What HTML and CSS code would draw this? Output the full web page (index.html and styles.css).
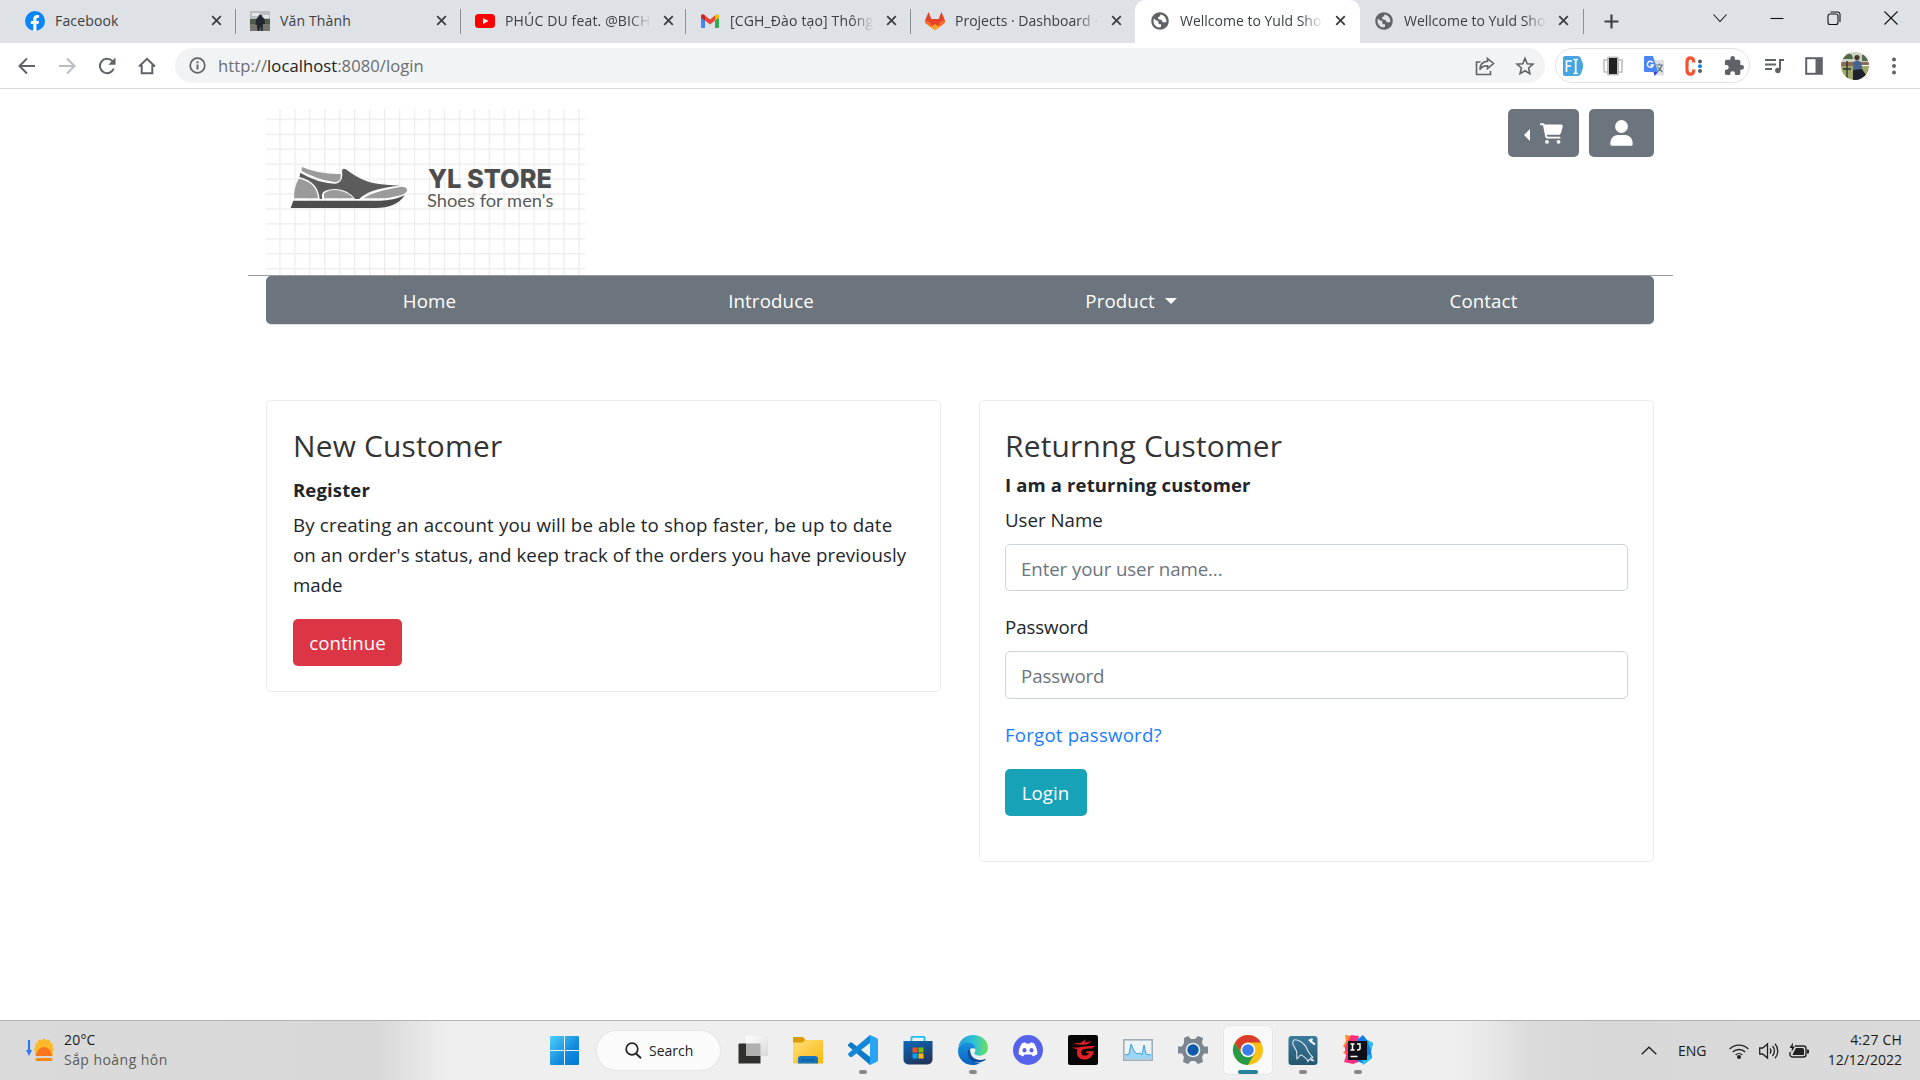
FILE: index.html
```html
<!DOCTYPE html>
<html lang="en">
<head>
<meta charset="utf-8">
<title>Wellcome to Yuld Shop</title>
<link rel="stylesheet" href="styles.css">
</head>
<body>
<svg class="defs" width="0" height="0" aria-hidden="true">
  <defs>
    <symbol id="x" viewBox="0 0 12 12"><path d="M1.3 1.3l9.4 9.4M10.7 1.3l-9.4 9.4" stroke="#3c4043" stroke-width="2"/></symbol>
    <symbol id="globe" viewBox="0 0 24 24"><path fill="#5f6368" d="M12 1.500C6.200 1.500 1.500 6.200 1.500 12S6.200 22.500 12 22.500 22.500 17.800 22.500 12 17.800 1.500 12 1.500z"/><path fill="var(--tab)" d="M4.200 12c0-1 .2-2 .6-2.900 1.500 2 3 2.700 5.200 2.700v2.200c0 1 1 2 2 2h1.200v2c0 .8-.4 1.500-1.200 1.800C7.600 19.800 4.200 16.400 4.200 12zM12.200 4.200c.6 1.400-.4 2.500-1.800 2.900-1 .2-.9 1.300-.4 2.100.8 1.100 2.400.8 3.600 1.500 1.100.7.900 2.300 2.100 2.800 1.300.6 2.600-.4 4-.2.3-4.800-3-8.900-7.500-9.100z"/></symbol>
  </defs>
</svg>

<header class="chrome">
  <div class="tabs">
    <div class="tab">
      <svg class="fav" viewBox="0 0 20 20"><circle cx="10" cy="10" r="10" fill="#0a85f7"/><path fill="#fff" d="M8.300 20v-7H5.800v-3h2.500V8c0-2.600 1.500-4 3.800-4 1 0 2 .2 2 .2v2.500h-1.200c-1.100 0-1.500.7-1.500 1.400V10h2.600l-.5 3h-2.100v7z"/></svg>
      <span class="label l1">Facebook</span><svg class="close"><use href="#x"/></svg>
    </div>
    <div class="tab">
      <svg class="fav" viewBox="0 0 20 20"><path fill="#b9bdc0" d="M0 0h20v9H0z"/><path fill="#e3e5e7" d="M2 2h7v3H2zM13 4h6v3h-6z"/><path fill="#4f5b48" d="M0 8h20v5H0z"/><path fill="#77776f" d="M0 13h20v7H0z"/><path fill="#222730" d="M8.500 5.500a1.800 1.800 0 0 1 3.600 0l2.400 2.500.5 5h-2l-.5 7h-1.500l-.7-5-1 5H7.500l-.5-6H5.500l.5-5.500z"/></svg>
      <span class="label l1">Văn Thành</span><svg class="close"><use href="#x"/></svg>
    </div>
    <div class="tab">
      <svg class="fav" viewBox="0 0 20 20"><rect y="3" width="20" height="14" rx="3.500" fill="#f00"/><path fill="#fff" d="M8 7l5.500 3L8 13z"/></svg>
      <span class="label l1 fade">PHÚC DU feat. @BICH</span><svg class="close"><use href="#x"/></svg>
    </div>
    <div class="tab">
      <svg class="fav" viewBox="0 0 20 20"><path fill="#4285f4" d="M1 5l4 3v9H2.200A1.200 1.200 0 0 1 1 15.800z"/><path fill="#34a853" d="M19 5l-4 3v9h2.800a1.200 1.200 0 0 0 1.200-1.200z"/><path fill="#ea4335" d="M5 4.500l5 4 5-4v5l-5 4-5-4z"/><path fill="#c5221f" d="M1 5.200C1 3 3.300 2.800 4.200 3.800L5 4.500v5L1 6.700z"/><path fill="#fbbc04" d="M19 5.200c0-2.200-2.300-2.400-3.200-1.400l-.8.7v5l4-2.800z"/></svg>
      <span class="label l1 fade">[CGH_Đào tạo] Thông</span><svg class="close"><use href="#x"/></svg>
    </div>
    <div class="tab before-active">
      <svg class="fav" viewBox="0 0 20 20"><path fill="#e24329" d="M10 19L.5 12 0 9.500 3.600 1l2.700 7h7.400l2.700-7L20 9.500l-.5 2.500z"/><path fill="#fc6d26" d="M0 9.500c2 .2 3.600 1 5 2l5 7.500-8.500-6A3.500 3.500 0 0 1 0 9.500zM20 9.500c-2 .2-3.600 1-5 2L10 19l8.500-6A3.500 3.500 0 0 0 20 9.500z"/><path fill="#fca326" d="M10 13l4.300 3L10 19.300 5.700 16z"/></svg>
      <span class="label fade">Projects · Dashboard ·</span><svg class="close"><use href="#x"/></svg>
    </div>
    <div class="tab active">
      <svg class="fav"><use href="#globe"/></svg>
      <span class="label fade">Wellcome to Yuld Sho</span><svg class="close"><use href="#x"/></svg>
    </div>
    <div class="tab last">
      <svg class="fav"><use href="#globe"/></svg>
      <span class="label fade">Wellcome to Yuld Sho</span><svg class="close"><use href="#x"/></svg>
    </div>
    <svg class="plus" viewBox="0 0 16 16"><path d="M8 .5v15M.5 8h15" stroke="#3c4043" stroke-width="2.300"/></svg>
    <div class="window-buttons">
      <svg viewBox="0 0 14 14"><path d="M.5 3.500L7 10.500l6.500-7"/></svg>
      <svg viewBox="0 0 14 14"><path d="M.5 7.500h13"/></svg>
      <svg viewBox="0 0 14 14"><rect x="1" y="3" width="10" height="10.500" rx="2"/><path d="M3.500 1h7a2.500 2.500 0 0 1 2.500 2.500V11"/></svg>
      <svg viewBox="0 0 14 14"><path d="M.5.5l13 13M13.500.5l-13 13"/></svg>
    </div>
  </div>

  <div class="toolbar">
    <div class="nav-icons">
      <svg viewBox="0 0 20 20" stroke="#5f6368"><path d="M18 10H3M10 2.500L2.500 10l7.500 7.500"/></svg>
      <svg viewBox="0 0 20 20" stroke="#bbbdc0"><path d="M2 10h15M10 2.500l7.500 7.500-7.500 7.500"/></svg>
      <svg viewBox="0 0 20 20" stroke="#5f6368"><path d="M16.800 12.500A7.200 7.200 0 1 1 15.500 5.200L17 7"/><path fill="#5f6368" stroke="none" d="M18.500 1.500v7.200h-7.200z"/></svg>
      <svg viewBox="0 0 20 20" stroke="#5f6368"><path d="M2 10.500L10 2.800l8 7.700M4.700 9v8.200h10.600V9"/></svg>
    </div>
    <div class="omnibox">
      <svg class="info" viewBox="0 0 17 17"><circle cx="8.500" cy="8.500" r="7.300" fill="none" stroke="#5f6368" stroke-width="1.700"/><path d="M8.500 7.500v5M8.500 4.300v1.900" stroke="#5f6368" stroke-width="1.900"/></svg>
      <span class="url">http://<b>localhost</b>:8080/login</span>
      <svg class="share" viewBox="0 0 20 20"><path d="M5.500 6H1.500v12.500h14V15"/><path d="M12.500 2.500l6 5-6 5V9.700c-4 0-6.300 1.200-7.600 4C5 9 7.500 5.500 12.500 5.200z"/></svg>
      <svg class="star" viewBox="0 0 20 20"><path d="M10 2.300l2.200 5.400 5.800.5-4.400 3.800 1.300 5.700-4.900-3-4.900 3L6.400 12 2 8.200l5.800-.5z"/></svg>
    </div>
    <div class="extensions">
      <svg viewBox="0 0 20 20"><path fill="#48a5e0" d="M2 0h12.500a4 4 0 0 1 3.300 2l2.200 6v4l-2.200 6a4 4 0 0 1-3.300 2H2a2 2 0 0 1-2-2V2a2 2 0 0 1 2-2z"/><path d="M3.500 16V5H9M3.500 10H8M10.500 3.500h1.200l1 1 1-1h1.200M10.500 17.500h1.200l1-1 1 1h1.200M12.700 4.500v12" fill="none" stroke="#fff" stroke-width="1.700"/></svg>
      <svg viewBox="0 0 20 20"><path fill="none" stroke="#bbb" stroke-width="1.500" d="M4 4H1v12h3M16 4h3v12h-3"/><rect x="4" y=".5" width="12" height="19" rx="1.500" fill="#bdbdbd"/><rect x="6" y="2" width="8" height="16" fill="#222"/></svg>
      <svg viewBox="0 0 20 20"><path fill="#dfe1e5" d="M8 4h11a1 1 0 0 1 1 1v13.500a1 1 0 0 1-1 1h-7z"/><path d="M12 9h7M15.500 7.500V9M18 9c-1 3.500-3 5.500-5.500 7M13.500 11l5 5" fill="none" stroke="#607d8b" stroke-width="1.200"/><path fill="#4a86f5" d="M1 0h8l5 16H1a1 1 0 0 1-1-1V1a1 1 0 0 1 1-1z"/><path fill="#3347b5" d="M9.500 16H14l-3.500 4z"/><path d="M8.800 6.500A3 3 0 1 0 9.300 9H6.500" fill="none" stroke="#fff" stroke-width="1.400"/></svg>
      <svg viewBox="0 0 20 20"><path d="M9.800 6.500C9.800 3 8.700 1.800 6.500 1.800S3 3 3 6v8c0 3 1.200 4.200 3.500 4.200s3.300-1.200 3.300-4.700" fill="none" stroke="#f4532e" stroke-width="3.200"/><circle cx="16" cy="5.500" r="2" fill="#555b66"/><circle cx="16" cy="10.300" r="2" fill="#1a83e0"/><circle cx="16" cy="15" r="2" fill="#555b66"/></svg>
      <svg viewBox="1 1 22 22"><path fill="#5f6368" d="M20.500 11H19V7a2 2 0 0 0-2-2h-4V3.500a2.500 2.500 0 0 0-5 0V5H4a2 2 0 0 0-2 2v3.800h1.500a2.700 2.700 0 0 1 0 5.400H2V20a2 2 0 0 0 2 2h3.800v-1.500a2.700 2.700 0 0 1 5.400 0V22H17a2 2 0 0 0 2-2v-4h1.500a2.500 2.500 0 0 0 0-5z"/></svg>
    </div>
    <div class="profile">
      <svg viewBox="0 0 20 20"><path d="M1 4h11M1 8.500h11M1 13h7M16 14V4h4" fill="none" stroke="#5f6368" stroke-width="2"/><circle cx="13.800" cy="14.500" r="2.700" fill="#5f6368"/></svg>
      <svg viewBox="0 0 20 20"><rect x="2.200" y="2.200" width="15.600" height="15.600" fill="none" stroke="#5f6368" stroke-width="2"/><path fill="#5f6368" d="M11.500 2H18v16h-6.500z"/></svg>
      <svg class="avatar" viewBox="0 0 28 28"><clipPath id="av"><circle cx="14" cy="14" r="14"/></clipPath><g clip-path="url(#av)"><path fill="#c9d3c0" d="M0 0h28v12H0z"/><path fill="#56694a" d="M0 3q6-4 11 0l1 4H0zM21 3l7-1v7h-7z"/><path fill="#9cab6c" d="M0 14h28v14H0z"/><path fill="#8a6a55" d="M0 10h13v4H0zM20 10h8v3h-8z"/><path d="M6 9v19M2 17h8" stroke="#2c2c2c" stroke-width="1.300"/><circle cx="16" cy="5.500" r="2.600" fill="#4b342b"/><path fill="#4a6390" d="M12.500 10l3.500-2 4 2 1.500 8-4 2h-5.500z"/><path fill="#1d222b" d="M12 18l9-1 4 6-7 5h-6z"/></g></svg>
      <svg viewBox="0 0 20 20" fill="#5f6368"><circle cx="10" cy="3.500" r="2"/><circle cx="10" cy="10" r="2"/><circle cx="10" cy="16.500" r="2"/></svg>
    </div>
  </div>
</header>

<main class="page">
  <div class="banner">
    <svg class="logo" viewBox="78 57 957 498">
      <defs><pattern id="grid" x="118" y="86" width="44.850" height="44.850" patternUnits="userSpaceOnUse"><path d="M0 2h45M2 0v45" stroke="#ebebeb" stroke-width="3.500" fill="none"/></pattern></defs>
      <rect x="78" y="57" width="957" height="498" fill="url(#grid)"/>
      <path fill="#4d4d4d" d="M160 332H420Q460 332 494 316Q470 354 405 354H152z"/>
      <path fill="#9b9b9b" d="M162 325Q162 290 176 266Q230 276 234 325zM186 231Q240 254 302 252V262Q300 278 282 276Q225 266 184 242zM252 325V312Q262 298 290 300Q320 304 342 325zM370 325Q400 304 484 290Q500 290 502 300Q500 310 482 316Q450 325 420 325z"/>
      <path fill="#5c5c5c" d="M181 248Q230 278 285 281Q306 280 307 255L306 243Q308 232 318 238Q375 284 440 284L480 287Q385 296 358 327H346Q320 296 285 297Q250 298 246 312V327H239Q234 274 178 261z"/>
      <text class="brand" x="564" y="294" textLength="372" lengthAdjust="spacingAndGlyphs">YL STORE</text>
      <text class="tagline" x="561" y="352" textLength="379" lengthAdjust="spacingAndGlyphs">Shoes for men's</text>
    </svg>
    <div class="actions">
      <button class="btn gray cart"><i class="caret-left"></i><svg viewBox="0 0 576 512"><path fill="#fff" d="M0 24C0 10.700 10.700 0 24 0h45.500c22 0 41.500 12.800 50.600 32H531c26.300 0 45.500 25 38.600 50.400l-41 152.300c-8.500 31.400-37 53.300-69.500 53.300H170.700l5.400 28.500c2.200 11.300 12.100 19.500 23.600 19.500H488c13.300 0 24 10.700 24 24s-10.700 24-24 24H199.700c-34.600 0-64.300-24.600-70.700-58.500L77.400 54.500C76.700 50.700 73.400 48 69.500 48H24C10.700 48 0 37.300 0 24z"/><circle cx="176" cy="464" r="48" fill="#fff"/><circle cx="464" cy="464" r="48" fill="#fff"/></svg></button>
      <button class="btn gray user"><svg viewBox="0 0 23 26"><circle cx="11.500" cy="6.500" r="6.400" fill="#fff"/><path fill="#fff" d="M.3 24c0-5.500 3-9 7.600-9h7.200c4.600 0 7.600 3.500 7.600 9 0 1.200-.6 1.800-1.600 1.800H1.900C.9 25.800.3 25.200.3 24z"/></svg></button>
    </div>
  </div>
  <nav class="menu">
    <a class="home">Home</a><a class="intro">Introduce</a><a class="product">Product<i class="caret-down"></i></a><a class="contact">Contact</a>
  </nav>

  <div class="columns">
    <section class="card">
      <h2>New Customer</h2>
      <p class="strong register">Register</p>
      <p class="text"><span class="p1">By creating an account you will be able to shop faster, be up to date</span><br><span class="p2">on an order's status, and keep track of the orders you have previously</span><br>made</p>
      <button class="btn red">continue</button>
    </section>
    <section class="card tall">
      <h2>Returnng Customer</h2>
      <p class="strong">I am a returning customer</p>
      <form>
        <label>User Name</label>
        <input type="text" placeholder="Enter your user name...">
        <label class="second">Password</label>
        <input class="pass" type="password" placeholder="Password">
        <a class="forgot">Forgot password?</a>
        <button type="button" class="btn teal">Login</button>
      </form>
    </section>
  </div>
</main>

<footer class="taskbar">
  <div class="weather">
    <svg viewBox="0 0 28 24"><path d="M3 2v12" stroke="#2b7bf3" stroke-width="2.200"/><path fill="#2b7bf3" d="M0 12h6l-3 6z"/><path fill="#fdb92c" d="M18 .5l2.500 1.500 3-.3 1 2.800 2.500 1.500-.5 3 1.500 2.500-1.500 2.500.5 4H9l.5-4L8 11.500 9.500 9 9 6l2.500-1.500 1-2.800 3 .3z"/><path fill="#f6761b" d="M10 18a8 9 0 1 1 16 0z"/><rect x="9.500" y="20" width="17" height="3" rx="1.500" fill="#f88a10"/></svg>
    <div class="lines"><span>20°C</span><span class="dim">Sắp hoàng hôn</span></div>
  </div>
  <div class="apps">
    <svg class="start" viewBox="0 0 29 29"><defs><linearGradient id="w" x1="0" y1="0" x2="1" y2="1"><stop offset="0" stop-color="#4fd0fc"/><stop offset=".6" stop-color="#138ade"/><stop offset="1" stop-color="#0078d4"/></linearGradient></defs><path fill="url(#w)" d="M1 0h13v14H0V1a1 1 0 0 1 1-1zM15 0h13a1 1 0 0 1 1 1v13H15zM0 15h14v14H1a1 1 0 0 1-1-1zM15 15h14v13a1 1 0 0 1-1 1H15z"/></svg>
    <div class="search"><svg viewBox="0 0 17 17"><circle cx="7" cy="7" r="5.800" fill="none" stroke="#222" stroke-width="1.700"/><path d="M11 11.500l5 4.800" stroke="#222" stroke-width="1.900"/></svg><span>Search</span></div>
    <div class="app"><svg viewBox="0 0 30 30"><defs><linearGradient id="tv" x2="1" y2="1"><stop stop-color="#fff"/><stop offset="1" stop-color="#d8d8d8"/></linearGradient></defs><path fill="#30302e" d="M1.500 8.500h20a1 1 0 0 1 1 1v19h-22v-19a1 1 0 0 1 1-1z"/><rect x="8" y="1" width="22" height="20" rx="1" fill="url(#tv)"/><path fill="#b0b0b0" d="M8 8.500h14.500V21H8z"/></svg></div>
    <div class="app"><svg viewBox="0 0 30 30"><defs><linearGradient id="fo" x2="1" y2="1"><stop stop-color="#ffe07a"/><stop offset="1" stop-color="#fbb80d"/></linearGradient></defs><path fill="#dc9c05" d="M1 2h9l2.500 3H30v8H0V3a1 1 0 0 1 1-1z"/><path fill="url(#fo)" d="M0 7.500h9.500L12 5h17a1 1 0 0 1 1 1v22.500H1a1 1 0 0 1-1-1z"/><path fill="#1673bf" d="M8 21h14a3 3 0 0 1 3 3v4.500H5V24a3 3 0 0 1 3-3z"/><path d="M8.500 25h13" stroke="#0d508c"/></svg></div>
    <div class="app running"><svg viewBox="0 0 30 30"><path fill="#0b7bc7" d="M0 9.500L2.200 7.500h1.600L22 22v8L.2 11z"/><path fill="#1388d8" d="M0 19.800l2.200 2.200h1.600L22 8V0L.2 18.500z"/><path fill="#27a5f2" d="M22 0l7 3.200a2 2 0 0 1 1 1.800v20a2 2 0 0 1-1 1.800L22 30l-1.500-1 1.500-1V2.300L20.500 1z"/></svg></div>
    <div class="app"><svg viewBox="0 0 30 30"><defs><linearGradient id="st" x2=".5" y2="1"><stop stop-color="#0a6cbd"/><stop offset="1" stop-color="#22365f"/></linearGradient></defs><path d="M8.500 7V2.500a.7.700 0 0 1 .7-.7h11.600a.7.700 0 0 1 .7.700V7" fill="none" stroke="#1fbdf3" stroke-width="1.800"/><path fill="url(#st)" d="M.5 6h29v18.500a5 5 0 0 1-5 5h-19a5 5 0 0 1-5-5z"/><path fill="#f25022" d="M9.500 12.500h5v5h-5z"/><path fill="#7fba00" d="M15.500 12.500h5v5h-5z"/><path fill="#00a4ef" d="M9.500 18.500h5v5h-5z"/><path fill="#ffb900" d="M15.500 18.500h5v5h-5z"/></svg></div>
    <div class="app running"><svg viewBox="0 0 24 24"><defs><linearGradient id="e1"><stop stop-color="#1f9fdf"/><stop offset=".55" stop-color="#30c3d3"/><stop offset="1" stop-color="#6be35a"/></linearGradient><linearGradient id="e2" x2="0" y2="1"><stop stop-color="#1a94df"/><stop offset="1" stop-color="#0a5fc2"/></linearGradient></defs><path fill="url(#e1)" d="M.3 10C1 4 6 0 12 0c7 0 12 4.600 12 10 0 4-3 6.500-6.500 6.500-2.500 0-4.500-.8-4.500-2 0-.7 1-1 1-2.800 0-3.500-4-5-7-5-3.500 0-6 1.500-6.700 3.300z"/><path fill="url(#e2)" d="M.1 11.500C.6 7.500 5 5.800 8.500 6c3 .3 5.500 2.500 5.500 5.500 0-1-5.500-2.500-5.500 3 0 5 4.500 8 9 8-2 1-3.800 1.500-5.500 1.500C5 24-.7 18.500.1 11.500z"/><path fill="#114f9f" d="M9.500 10.800c-3 2-2 8.500 2.500 10.500 4 1.700 7.500.3 9.800-1.300.5-.4.4-1-.3-.8-4.500 1.900-9.500 0-11-3.400-.8-1.800-.8-3.600-1-5z"/></svg></div>
    <div class="app"><svg viewBox="0 0 30 30"><circle cx="15" cy="15" r="15" fill="#5562ea"/><path fill="#fff" d="M9 8.200l3.200-.9.700 1.200h4.200l.7-1.200 3.200.9c2.400 3.500 3.600 7.200 3.300 11l-4.300 2.300-1.400-2h-7.200l-1.400 2-4.300-2.300c-.3-3.800.9-7.500 3.300-11z"/><ellipse cx="11.500" cy="15.200" rx="2" ry="2.200" fill="#5562ea"/><ellipse cx="18.500" cy="15.200" rx="2" ry="2.200" fill="#5562ea"/></svg></div>
    <div class="app"><svg viewBox="0 0 30 30"><rect width="30" height="30" rx="2" fill="#060606"/><path fill="#e01f26" d="M4.500 9.500c3-1.700 5-1.600 8-1.500l5-3.800-1 3.200c2.500 0 4.500-.5 6.500-1.400-1.500 3-4.500 3.700-8 3.700-3.500-.2-6-.9-10.500-.2zM3.500 12.500c5 .6 11-1.300 24-1.500l-4 2.600c-4-.5-8.500-.1-10 2.200-1.200 2.200 0 5 3.500 4.800 2.200-.1 3.500-1 4-2.600h-3.500l1.500-1.800h7c-1.500 5.500-4.500 8.300-9.500 8.300-6 0-9-4.500-7-10z"/></svg></div>
    <div class="app"><svg viewBox="0 0 30 30"><rect x=".8" y="4.800" width="28.400" height="20.400" fill="#eef3f7" stroke="#a3adb7" stroke-width="1.600"/><path fill="#9dd6f5" d="M2 24v-4l4-1 2-10 3 7 3 3 3-1 2 2 2-10 2 9 5 1v4z"/><path d="M2 20l4-1 2-10 3 7 3 3 3-1 2 2 2-10 2 9 5 1" fill="none" stroke="#3aa2df"/></svg></div>
    <div class="app"><svg viewBox="0 0 30 30"><path fill="#7c868f" d="M6 3l4-2 3 3h4l3-3 5 2-1 5 2 3.500h4v7h-4L24 22l1 5-5 2-3-3h-4l-3 3-5-2 1-5-2-3.500H0v-7h4L6 8z"/><circle cx="15" cy="15" r="7.300" fill="#e9eef2"/><circle cx="15" cy="15" r="5.700" fill="#0d5aa8"/></svg></div>
    <div class="app current"><svg viewBox="0 0 30 30"><circle cx="15" cy="15" r="15" fill="#fbc116"/><path fill="#269a46" d="M2 7.500A15 15 0 0 0 15 30l6.500-11.200L15 15 8.500 18.700z"/><path fill="#dc3c2e" d="M2 7.500A15 15 0 0 1 28 7.500H15a7.500 7.500 0 0 0-6.500 11.200z"/><circle cx="15" cy="15" r="7.300" fill="#fff"/><circle cx="15" cy="15" r="5.800" fill="#3a7cec"/></svg></div>
    <div class="app running"><svg viewBox="0 0 30 30"><defs><linearGradient id="my" x2="0" y2="1"><stop stop-color="#3c7b9b"/><stop offset="1" stop-color="#24566f"/></linearGradient></defs><rect x=".5" y="1" width="29" height="29" rx="3" fill="url(#my)"/><path d="M26 26l-5-1.500-1 2c-1-4-4-4-6-6.500l-2 .5-3 3.500c-1-3 .5-5-.5-8L5 9.500C4 5.500 6 4 9 5c5 1.500 9 5.500 11 11 1 3 3 4 5 6.500l-2.500.5z" fill="none" stroke="#d7e5ec" stroke-width="1.100"/><path d="M21 4.500l2 2 4 3M23 6.500l1-3" stroke="#fff" stroke-width="2"/></svg></div>
    <div class="app running"><svg viewBox="0 0 30 30"><path fill="#fe8c2e" d="M2 0l7 1 3 10-8 9-4-2 3-4-3-3 3-5z"/><path fill="#fd2f7f" d="M8 0l8 1-2 9-8 8 3 5 9 3-8 3-9-2 2-6-1-9z"/><path fill="#127dea" d="M15 4l5-4 4 5 6 3-2 8 1 7-8 6-7-3z"/><path fill="#22c3ec" d="M24 5l6 3-2 8zM20 30l8-6-1-5-8 6z"/><path fill="#101018" d="M5 6h19v19H5z"/><path d="M7.500 9h4M9.500 9v6M7.500 15h4M14 9h3v4.500q0 1.500-3 1.500M7.500 21.500h7" fill="none" stroke="#fff" stroke-width="1.500"/></svg></div>
  </div>
  <div class="tray">
    <svg class="up" viewBox="0 0 16 9"><path d="M.7 8.300L8 1.200l7.300 7.100" fill="none" stroke="#222" stroke-width="1.400"/></svg>
    <span class="lang">ENG</span>
    <svg class="ti" viewBox="0 0 20 16" fill="none" stroke="#222" stroke-width="1.400"><path d="M.7 6a13 13 0 0 1 18.600 0M3.800 9a8.800 8.800 0 0 1 12.400 0M6.700 12a4.700 4.700 0 0 1 6.600 0"/><circle cx="10" cy="14" r="1.300" fill="#222"/></svg>
    <svg class="ti" viewBox="0 0 20 16" fill="none" stroke="#222" stroke-width="1.300"><path d="M.7 5h3L8.500 1v14L3.700 11h-3zM11 5.500a4 4 0 0 1 0 5M13.500 3a7.500 7.500 0 0 1 0 10M16 .7a11 11 0 0 1 0 14.600"/></svg>
    <svg class="ti" viewBox="0 0 20 16"><path d="M6 3h8.500a2.500 2.500 0 0 1 2.500 2.500v6a2.500 2.500 0 0 1-2.500 2.500H3.500A2.500 2.500 0 0 1 1 11.500V9" fill="none" stroke="#222" stroke-width="1.400"/><path fill="#222" d="M7 5h6.500a1.500 1.500 0 0 1 1.500 1.500V12H3.500l1-2.500zM18 6.500h1a1 1 0 0 1 1 1v2a1 1 0 0 1-1 1h-1zM4-.5L.5 5H3L2.500 9 6 3.500H3.800z"/></svg>
    <div class="clock"><span class="time">4:27 CH</span><span class="date">12/12/2022</span></div>
  </div>
</footer>
</body>
</html>
```
FILE: styles.css
```css
* { box-sizing: border-box; }
body {
  margin: 0;
  width: 1920px;
  height: 1080px;
  overflow: hidden;
  display: flex;
  flex-direction: column;
  background: #fff;
  color: #212529;
  font-family: "Open Sans", "Noto Sans", sans-serif;
  font-size: 18.7px;
  line-height: 30px;
}
svg { display: block; flex: none; overflow: visible; }
.defs { position: absolute; }

/* Browser frame */
.chrome { height: 89px; border-bottom: 1px solid #d9dbde; flex: none; }
.tabs { display: flex; height: 43px; padding-left: 11px; background: #dee1e6; align-items: stretch; }
.tab {
  --tab: #dee1e6;
  display: flex;
  align-items: center;
  width: 225px;
  padding: 0 14px 2px 14px;
  position: relative;
}
.tab::after { content: ""; position: absolute; right: 0; top: 9px; width: 1px; height: 25px; background: #8b8e93; }
.tab.active { --tab: #fff; background: #fff; border-radius: 10px 10px 0 0; padding-left: 15px; }
.tab.before-active { width: 224px; padding-right: 13px; }
.tab.last { width: 224px; padding-right: 15px; }
.tab.active::after, .tab.before-active::after { display: none; }
.fav { width: 20px; height: 20px; margin-right: 10px; }
.label {
  flex: 1;
  white-space: nowrap;
  font-size: 14px;
  line-height: 22px;
  color: #3c4043;
  margin-right: 12px;
}
.label.fade {
  -webkit-mask-image: linear-gradient(to right, #000 calc(100% - 22px), transparent);
  mask-image: linear-gradient(to right, #000 calc(100% - 22px), transparent);
}
.label.l1 { letter-spacing: 0.15px; }
.close { width: 11px; height: 11px; }
.plus { width: 15px; height: 15px; margin: 14px 0 0 20px; }
.window-buttons { display: flex; gap: 43px; margin: 11px 22px 0 auto; }
.window-buttons svg { width: 14px; height: 14px; fill: none; stroke: #111; stroke-width: 1.1; }

.toolbar { display: flex; align-items: center; height: 45px; padding-left: 17px; }
.nav-icons { display: flex; gap: 20px; width: 158px; }
.nav-icons svg { width: 20px; height: 20px; fill: none; stroke-width: 2; }
.omnibox { display: flex; align-items: center; width: 1370px; height: 35px; border-radius: 18px; background: #f1f3f4; padding: 0 12px 0 14px; }
.info { width: 17px; height: 17px; margin-right: 12px; }
.url { font-size: 16.6px; letter-spacing: 0.06px; line-height: 24px; color: #6a6e73; flex: 1; }
.url b { font-weight: 400; color: #202124; }
.share, .star { width: 20px; height: 20px; fill: none; stroke: #5f6368; stroke-width: 1.6; margin-left: 20px; position: relative; left: 2px; }
.extensions { display: flex; align-items: center; justify-content: space-between; width: 195px; height: 35px; margin-left: 10px; padding: 0 6px; border: 1px solid #dfe1e4; border-radius: 18px; }
.extensions svg { width: 20px; height: 20px; }
.profile { display: flex; align-items: center; margin-left: 13px; }
.profile svg { width: 20px; height: 20px; margin-right: 20px; }
.profile svg:last-child { margin-right: 0; }
.profile .avatar { width: 28px; height: 28px; margin: 0 15px 0 -3px; }
.extensions svg, .profile svg { position: relative; left: 1px; }

/* Shop page */
.page { flex: 1; padding: 20px 247px 0 248px; }
.banner { display: flex; justify-content: space-between; align-items: flex-start; height: 167px; padding: 0 19px 0 18px; border-bottom: 1px solid #999; }
.logo { width: 319px; height: 166px; overflow: hidden; }
.brand { font: 800 79px Inter, sans-serif; fill: #4d4d4d; }
.tagline { font: 400 51px Lato, sans-serif; fill: #5a5a5a; }
.actions { display: flex; gap: 10px; }
.btn { font: inherit; border: 0; border-radius: 5px; color: #fff; height: 47px; padding: 0; display: flex; align-items: center; justify-content: center; }
.gray { background: #6c757d; height: 48px; }
.cart { width: 71px; justify-content: flex-start; padding-left: 16px; }
.cart svg { width: 23px; height: 21px; margin: 1px 0 0 10px; }
.user { width: 65px; }
.user svg { width: 23px; height: 26px; }
.caret-left { border: 6px solid transparent; border-left: 0; border-right-color: #fff; margin-top: 4px; }
.caret-down { display: inline-block; border: 6px solid transparent; border-bottom: 0; border-top-color: #fff; margin-left: 10px; vertical-align: 4px; }
.menu { display: flex; margin: 0 19px 0 18px; height: 48px; background: #6c757d; border-radius: 5px; box-shadow: 0 1px 0 #dfe1e4; color: #fff; line-height: 49px; text-align: center; letter-spacing: 0.12px; }
.home { width: 327px; }
.intro { width: 356px; }
.product { width: 364px; }
.contact { width: 341px; }

.columns { display: flex; gap: 38px; align-items: flex-start; margin: 76px 19px 0 18px; }
.card { width: 675px; height: 292px; border: 1px solid #ececec; border-radius: 5px; padding: 26px 25px 0 26px; }
.card.tall { height: 462px; padding-left: 25px; }
h2 { margin: 0; font-size: 29.9px; font-weight: 500; line-height: 36px; color: #333; letter-spacing: 0.2px; padding-top: 1px; margin-bottom: -1px; }
.strong { margin: 7px 0 0; font-weight: 700; font-size: 18.5px; letter-spacing: 0.14px; }
.register { margin-top: 12px; }
.text { margin: 5px 0 19px; white-space: nowrap; }
.p1 { letter-spacing: 0.16px; }
.p2 { letter-spacing: 0.08px; }
.red { width: 109px; background: #dc3545; }
.teal { width: 82px; background: #17a2b8; margin-top: 19px; padding-right: 1px; }
label, .forgot { display: block; margin-top: 5px; }
label.second, .forgot { margin-top: 21px; }
label.second { letter-spacing: -0.1px; }
input { display: block; width: 623px; height: 47px; margin-top: 9px; padding: 1px 15px 0; border: 1px solid #ced4da; border-radius: 5px; font: inherit; letter-spacing: -0.1px; background: #fff; }
input.pass { height: 48px; }
input::placeholder { color: #6c757d; opacity: 1; }
.forgot { color: #1a7cff; letter-spacing: 0.18px; }

/* Taskbar */
.taskbar {
  display: flex;
  flex: none;
  height: 60px;
  border-top: 1px solid #b5b5b5;
  background: linear-gradient(90deg, #dadada 0, #d8d8d8 375px, #efefef 450px, #efefef 1450px, #e9e9e9 1485px, #dbdbdb 1530px, #d8d8d8 1600px, #dadada 100%);
  color: #1b1b1b;
  font-size: 14px;
  line-height: 20px;
}
.weather { display: flex; width: 550px; padding: 9px 0 0 26px; }
.weather svg { width: 28px; height: 24px; margin-top: 8px; }
.lines { display: flex; flex-direction: column; margin-left: 10px; letter-spacing: 0.2px; }
.dim { color: #5b5b5b; letter-spacing: 0.45px; }
.apps { display: flex; align-items: center; height: 59px; width: 841px; }
.start { width: 29px; height: 29px; }
.search { display: flex; align-items: center; width: 123px; height: 39px; margin: 0 5px 0 18px; padding-left: 28px; background: #fbfbfb; border-radius: 20px; box-shadow: 0 0 0 1px #e6e6e6; }
.search svg { width: 17px; height: 17px; margin-right: 7px; }
.app { position: relative; width: 55px; height: 59px; display: flex; align-items: center; justify-content: center; padding-bottom: 1px; }
.app svg { width: 30px; height: 30px; position: relative; }
.running::after, .current::after { content: ""; position: absolute; bottom: 6px; left: 24px; width: 8px; height: 4px; border-radius: 2px; background: #888; }
.current::before { content: ""; position: absolute; left: 4px; top: 5px; width: 48px; height: 48px; border-radius: 5px; background: #f9f9f9; box-shadow: 0 0 0 1px #e7e7e7; }
.current::after { left: 18px; width: 20px; background: #27839a; }
.tray { display: flex; align-items: center; flex: 1; justify-content: flex-end; padding-right: 18px; }
.up { width: 16px; height: 9px; margin-right: 21px; }
.lang { width: 29px; margin-right: 22px; }
.ti { width: 20px; height: 16px; margin-right: 10px; }
.clock { display: flex; flex-direction: column; align-items: flex-end; width: 83px; height: 41px; }
.time { letter-spacing: 0.2px; }
```
